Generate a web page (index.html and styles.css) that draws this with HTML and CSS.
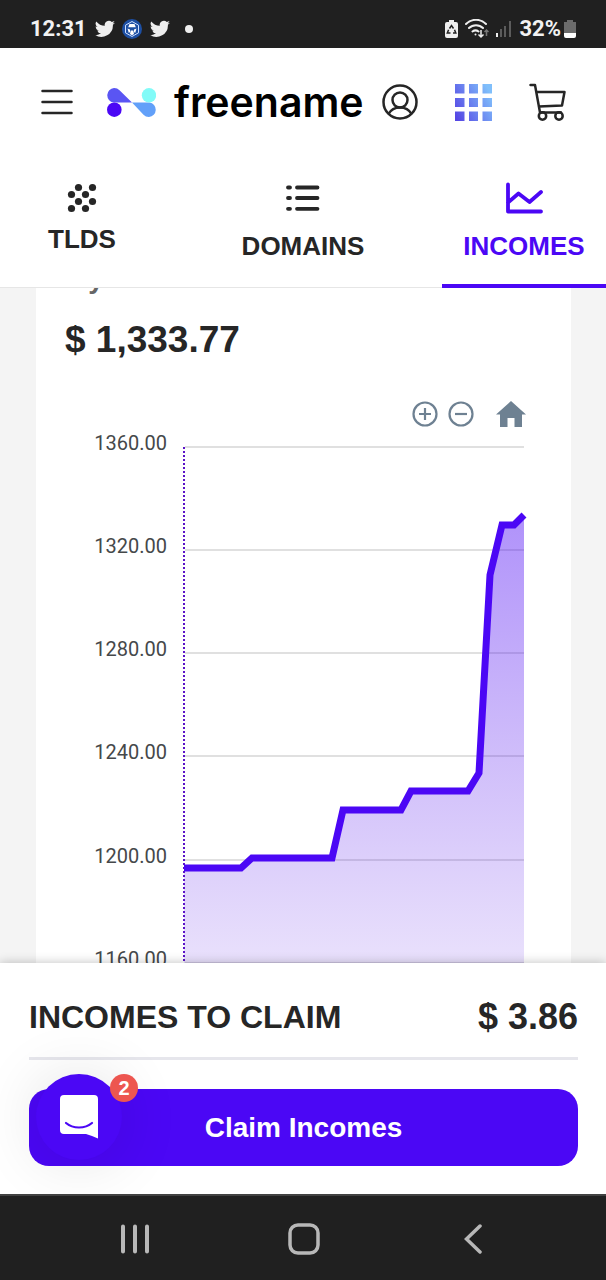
FILE: index.html
```html
<!DOCTYPE html>
<html lang="en">
<head>
    <meta charset="UTF-8">
    <meta name="viewport" content="width=device-width, initial-scale=1.0">
    <title>freename - Incomes</title>
    <link rel="stylesheet" href="styles.css">
</head>

<body>
    <!-- status bar -->
    <div class="status-bar">
        <div class="status-group">
            <span>12:31</span>
            <svg class="bird" width="20" height="18" viewBox="1 2 22 19"><path fill="#eee" d="M23 4.6a9 9 0 0 1-2.6.7 4.500 4.500 0 0 0 2-2.500 9 9 0 0 1-2.900 1.100A4.500 4.500 0 0 0 11.800 8 12.900 12.900 0 0 1 2.400 3.200a4.500 4.500 0 0 0 1.400 6 4.500 4.500 0 0 1-2-.6 4.500 4.500 0 0 0 3.600 4.500 4.500 4.500 0 0 1-2 .1 4.500 4.500 0 0 0 4.200 3.100A9.100 9.100 0 0 1 1 18.200 12.800 12.800 0 0 0 20.700 6.800 9 9 0 0 0 23 4.600z"/></svg>
            <svg width="20" height="20" viewBox="0 0 20 20">
                <circle cx="10" cy="10" r="10" fill="#1d4fa3"/>
                <path d="M10 2.500l6.500 3.700v7.600L10 17.500l-6.500-3.700V6.200z" fill="none" stroke="#cfe0ff"/>
                <path d="M7.500 5h5l1.300 3.200H6.200zM5.500 9.500l2.500 1v2.500l-1.200 1zM14.500 9.500l-2.500 1v2.500l1.200 1zM8.700 11.500h2.600l.7 3.500-2 1.200L8 15z" fill="#fff"/>
            </svg>
            <svg class="bird" width="20" height="18" viewBox="1 2 22 19"><path fill="#eee" d="M23 4.6a9 9 0 0 1-2.6.7 4.500 4.500 0 0 0 2-2.500 9 9 0 0 1-2.900 1.100A4.500 4.500 0 0 0 11.800 8 12.900 12.900 0 0 1 2.400 3.200a4.500 4.500 0 0 0 1.400 6 4.500 4.500 0 0 1-2-.6 4.500 4.500 0 0 0 3.600 4.500 4.500 4.500 0 0 1-2 .1 4.500 4.500 0 0 0 4.200 3.100A9.100 9.100 0 0 1 1 18.200 12.800 12.800 0 0 0 20.700 6.800 9 9 0 0 0 23 4.600z"/></svg>
            <span class="more-dot"></span>
        </div>
        <div class="status-group status-right">
            <svg width="13" height="18" viewBox="0 0 13 18">
                <path d="M4 0h5v2h2a2 2 0 0 1 2 2v12a2 2 0 0 1-2 2H2a2 2 0 0 1-2-2V4a2 2 0 0 1 2-2h2z" fill="#eee"/>
                <path d="M4.500 8.500L6.500 5.500l2 3M9.500 9.800l1.300 3.200H8M5.500 13H2.300l1.300-3.200" fill="none" stroke="#202020" stroke-width="1.500"/>
            </svg>
            <svg width="24" height="20" viewBox="0 0 24 20" fill="none" stroke="#eee" stroke-width="2">
                <path d="M1 5a14 14 0 0 1 20 0M4 9a10 10 0 0 1 14 0M7.500 12.500a5 5 0 0 1 6 0" stroke-linecap="round"/>
                <circle cx="10.500" cy="15.500" r="1" fill="#eee" stroke="none"/>
                <path d="M16 11v7M13.500 15.500l2.500 2.500 2.500-2.500" stroke-width="1.500"/>
                <path d="M21.500 17v-6M19.500 13l2-2 2 2" stroke="#777" stroke-width="1.500"/>
            </svg>
            <svg width="16" height="17" viewBox="0 0 16 17">
                <path d="M0 13h2v4H0z" fill="#eee"/>
                <path d="M4 9h2v8H4zM8 6h2v11H8zM13 1h2v16h-2z" fill="#5c5c5c"/>
            </svg>
            <span class="battery-label">32%</span>
            <svg width="12" height="18" viewBox="0 0 12 18">
                <path d="M3 0h6v2h3v11H0V2h3z" fill="#6b6b6b"/>
                <path d="M0 13h12v3a2 2 0 0 1-2 2H2a2 2 0 0 1-2-2z" fill="#fff"/>
            </svg>
        </div>
    </div>

    <!-- header -->
    <header class="header">
        <button class="icon-button" aria-label="Menu">
            <svg width="32" height="26" viewBox="0 0 32 26" stroke="#262626" stroke-width="2.500" stroke-linecap="round"><path d="M1.500 2h29M1.500 13h29M1.500 24h29"/></svg>
        </button>
        <a class="logo" href="#">
            <svg width="49" height="29" viewBox="0 0 49 29">
                <path d="M7 0a7.500 7.500 0 0 1 5.500 2.300L25 14.500H6.500A7.300 7.300 0 0 1 7 0z" fill="#5a55f3"/>
                <path d="M42 29a7.500 7.500 0 0 1-5.500-2.300L25 14.500h17.500A7.300 7.300 0 0 1 42 29z" fill="#62a0f9"/>
                <circle cx="42" cy="7.300" r="7.200" fill="#82fbf8"/>
                <circle cx="7.300" cy="21.700" r="7.300" fill="#4b07f5"/>
            </svg>
            <span class="logo-text">freename</span>
        </a>
        <div class="header-actions">
            <button class="icon-button" aria-label="Account">
                <svg width="36" height="36" viewBox="0 0 36 36" fill="none" stroke="#262626" stroke-width="2.500">
                    <circle cx="18" cy="18" r="16.500"/>
                    <circle cx="18" cy="16" r="7.500"/>
                    <path d="M6.500 30c2.500-4.500 6.500-6.500 11.500-6.500s9 2 11.500 6.500"/>
                </svg>
            </button>
            <button class="icon-button" aria-label="Apps">
                <svg width="37" height="37" viewBox="0 0 37 37">
                    <defs>
                        <linearGradient id="apps" gradientUnits="userSpaceOnUse" x1="0" y1="32" x2="37" y2="12">
                            <stop offset="0" stop-color="#5546e4"/>
                            <stop offset="1" stop-color="#80bffb"/>
                        </linearGradient>
                    </defs>
                    <path fill="url(#apps)" d="M0 0h9.500v9.500H0zM14 0h9v9.500h-9zM27.500 0H37v9.500h-9.500zM0 14h9.500v9H0zM14 14h9v9h-9zM27.500 14H37v9h-9.500zM0 27.500h9.500V37H0zM14 27.500h9V37h-9zM27.500 27.500H37V37h-9.500z"/>
                </svg>
            </button>
            <button class="icon-button" aria-label="Cart">
                <svg width="37" height="38" viewBox="0 0 37 38" fill="none" stroke="#262626" stroke-width="2.500" stroke-linecap="round" stroke-linejoin="round">
                    <path d="M1.500 2H6l5 27.500M7.700 9H35.500l-2.500 13.500-23.200 1M11 29.500h21"/>
                    <circle cx="13.500" cy="33" r="3.700"/>
                    <circle cx="30" cy="33" r="3.700"/>
                </svg>
            </button>
        </div>
    </header>

    <!-- tabs -->
    <nav class="tabs">
        <a class="tab" href="#">
            <svg width="30" height="30" viewBox="0 0 30 30" fill="#262626">
                <circle cx="11.500" cy="4.500" r="3.600"/><circle cx="25.500" cy="4.500" r="3.600"/>
                <circle cx="4.500" cy="11.500" r="3.600"/><circle cx="18.500" cy="11.500" r="3.600"/>
                <circle cx="11.500" cy="18.500" r="3.600"/><circle cx="25.500" cy="18.500" r="3.600"/>
                <circle cx="4.500" cy="25.500" r="3.600"/><circle cx="18.500" cy="25.500" r="3.600"/>
            </svg>
            TLDS
        </a>
        <a class="tab" href="#">
            <svg width="44" height="44" viewBox="0 0 44 44" stroke="#262626" stroke-width="3.800" stroke-linecap="round"><path d="M7 11.500h2M16 11.500h20.500M7 22h2M16 22h20.500M7 32.800h2M16 32.800h20.500"/></svg>
            DOMAINS
        </a>
        <a class="tab active" href="#">
            <svg width="44" height="44" viewBox="0 0 44 44" fill="none" stroke="#4b07f5" stroke-width="3.800" stroke-linecap="round" stroke-linejoin="round"><path d="M6 8.500v27h33M6 26.500l10.500-9 11 8.500L39 16"/></svg>
            INCOMES
        </a>
    </nav>

    <!-- incomes card, scrolled under the tabs -->
    <main class="content">
        <section class="card">
            <h2 class="card-title">My Incomes</h2>
            <p class="total">$ 1,333.77</p>
            <div class="toolbar">
                <button class="icon-button" aria-label="Zoom in">
                    <svg width="26" height="26" viewBox="0 0 26 26" fill="none" stroke="#6e8192" stroke-width="2.200"><circle cx="13" cy="13" r="11.500"/><path d="M13 7v12M7 13h12"/></svg>
                </button>
                <button class="icon-button" aria-label="Zoom out">
                    <svg width="26" height="26" viewBox="0 0 26 26" fill="none" stroke="#6e8192" stroke-width="2.200"><circle cx="13" cy="13" r="11.500"/><path d="M7 13h12"/></svg>
                </button>
                <button class="icon-button home" aria-label="Reset zoom">
                    <svg width="30" height="26" viewBox="0 0 30 26" fill="#6e8192"><path d="M15 0l15 13.500h-4V26h-7.500v-9h-7v9H4V13.500H0z"/></svg>
                </button>
            </div>
            <svg class="chart" viewBox="0 0 535 560">
                <defs>
                    <linearGradient id="area" gradientUnits="userSpaceOnUse" x1="0" y1="82" x2="0" y2="531">
                        <stop offset="0" stop-color="#4b07f5" stop-opacity="0.440"/>
                        <stop offset="1" stop-color="#5514e8" stop-opacity="0.130"/>
                    </linearGradient>
                </defs>
                <path class="grid-line" d="M149 15H488M149 118H488M149 221H488M149 324H488M149 428H488M149 531H488"/>
                <path fill="url(#area)" d="M148 436H205L216 426H296L307 378H365L375 359H432L443 341L454 143L466 93H478L488 83V531H148z"/>
                <path class="cursor-line" d="M148 15V531"/>
                <path class="line" d="M148 436H205L216 426H296L307 378H365L375 359H432L443 341L454 143L466 93H478L488 83"/>
                <g class="axis">
                    <text x="131" y="18">1360.00</text>
                    <text x="131" y="121">1320.00</text>
                    <text x="131" y="224">1280.00</text>
                    <text x="131" y="327">1240.00</text>
                    <text x="131" y="431">1200.00</text>
                    <text x="131" y="534">1160.00</text>
                </g>
            </svg>
        </section>
    </main>

    <!-- claim panel -->
    <section class="claim">
        <div class="claim-row">
            <span>INCOMES TO CLAIM</span>
            <span class="claim-amount">$ 3.86</span>
        </div>
        <button class="claim-button">Claim Incomes</button>
        <button class="chat" aria-label="Open chat">
            <svg width="38" height="44" viewBox="0 0 38 44">
                <path d="M4 0h30a4 4 0 0 1 4 4v39.500c-4-1.500-8-3.500-12-4.500H4a4 4 0 0 1-4-4V4a4 4 0 0 1 4-4z" fill="#fff"/>
                <path d="M6 28c7 6 19 6 26 0" fill="none" stroke="#4b07f5" stroke-width="2.200" stroke-linecap="round"/>
            </svg>
            <span class="chat-badge">2</span>
        </button>
    </section>

    <!-- system navigation -->
    <nav class="system-nav">
        <button class="icon-button" aria-label="Recent apps">
            <svg width="30" height="30" viewBox="0 0 30 30" stroke="#b8b8b8" stroke-width="4" stroke-linecap="round"><path d="M3 2.500v25M15 2.500v25M27 2.500v25"/></svg>
        </button>
        <button class="icon-button" aria-label="Home">
            <svg width="32" height="32" viewBox="0 0 32 32" fill="none" stroke="#b8b8b8" stroke-width="3.500"><rect x="2" y="2" width="28" height="28" rx="8"/></svg>
        </button>
        <button class="icon-button" aria-label="Back">
            <svg width="18" height="30" viewBox="0 0 18 30" fill="none" stroke="#b8b8b8" stroke-width="3.500" stroke-linecap="round"><path d="M16 2L2.500 15 16 28"/></svg>
        </button>
    </nav>
</body>
</html>
```
FILE: styles.css
```css
* {
    box-sizing: border-box;
}

body {
    font-family: "Liberation Sans", Arial, sans-serif;
    background-color: #f4f4f4;
    color: #262626;
    margin: 0;
    display: flex;
    flex-direction: column;
    height: 100vh;
}

svg {
    display: block;
}

button {
    font-family: inherit;
    border: none;
    padding: 0;
    cursor: pointer;
}

a {
    color: inherit;
    text-decoration: none;
}

.icon-button {
    background: none;
}

/* status bar */
.status-bar {
    display: flex;
    justify-content: space-between;
    align-items: center;
    height: 48px;
    padding: 9px 30px 0;
    background-color: #202020;
    color: #f2f2f2;
    font-family: Roboto, sans-serif;
    font-size: 22px;
    font-weight: 700;
}

.status-group {
    display: flex;
    align-items: center;
    gap: 7px;
}

.status-group .bird {
    margin-left: 1px;
}

.battery-label {
    margin-right: -4px;
}

.more-dot {
    width: 8px;
    height: 8px;
    margin-left: 8px;
    border-radius: 50%;
    background-color: #eee;
}

/* header */
.header {
    display: flex;
    align-items: center;
    height: 108px;
    padding: 0 40px 0 41px;
    background-color: #fff;
}

.logo {
    display: flex;
    align-items: center;
    gap: 18px;
    margin-left: 34px;
}

.logo-text {
    font-family: Inter, sans-serif;
    font-size: 41px;
    font-weight: 600;
    line-height: 48px;
    color: #000;
}

.header-actions {
    display: flex;
    align-items: center;
    gap: 37px;
    margin-left: auto;
}

/* tabs */
.tabs {
    display: flex;
    justify-content: space-between;
    height: 132px;
    background-color: #fff;
    box-shadow: inset 0 -1px #e6e6e6;
}

.tab {
    display: flex;
    flex-direction: column;
    align-items: center;
    justify-content: center;
    gap: 11px;
    min-width: 164px;
    padding-bottom: 4px;
    border-bottom: 4px solid transparent;
    font-size: 26px;
    font-weight: 700;
    line-height: 30px;
}

.tab.active {
    color: #4b07f5;
    border-bottom-color: #4b07f5;
}

/* card */
.content {
    flex: 1;
    min-height: 0;
    overflow: hidden;
    padding: 0 35px 0 36px;
}

.card {
    margin-top: -31px;
    background-color: #fff;
}

.card-title {
    margin: 0;
    padding: 6px 29px 0;
    font-size: 28px;
    font-weight: 700;
    line-height: 32px;
    color: #666;
}

.total {
    margin: 0;
    padding: 23px 29px 0;
    font-size: 37px;
    font-weight: 700;
    line-height: 44px;
}

.toolbar {
    display: flex;
    justify-content: flex-end;
    gap: 10px;
    padding: 39px 45px 5px;
}

.home {
    margin-left: 12px;
}

.chart {
    width: 100%;
}

.grid-line {
    stroke: #e0e0e0;
    stroke-width: 2;
}

.cursor-line {
    stroke: #5a12c8;
    stroke-width: 2;
    stroke-dasharray: 2;
}

.line {
    fill: none;
    stroke: #4b07f5;
    stroke-width: 7;
}

.axis {
    font-family: Roboto, sans-serif;
    font-size: 20px;
    fill: #45484a;
    text-anchor: end;
}

/* claim panel */
.claim {
    position: relative;
    padding: 30px 28px 28px 29px;
    background-color: #fff;
    box-shadow: 0 0 10px rgba(0, 0, 0, 0.25);
}

.claim-row {
    display: flex;
    justify-content: space-between;
    padding-bottom: 16px;
    border-bottom: 3px solid #e6e6ec;
    font-size: 32px;
    font-weight: 700;
    line-height: 48px;
}

.claim-amount {
    font-size: 36px;
}

.claim-button {
    display: block;
    width: 100%;
    height: 77px;
    margin-top: 29px;
    border-radius: 20px;
    background-color: #4b07f5;
    color: #fff;
    font-size: 28px;
    font-weight: 700;
}

.chat {
    position: absolute;
    left: 36px;
    bottom: 34px;
    display: flex;
    align-items: center;
    justify-content: center;
    width: 86px;
    height: 86px;
    border-radius: 50%;
    background-color: #4b07f5;
    box-shadow: 0 2px 64px rgba(0, 0, 0, 0.12);
}

.chat-badge {
    position: absolute;
    top: 0;
    right: -16px;
    width: 28px;
    border-radius: 50%;
    background-color: #ed5650;
    color: #fff;
    font-size: 20px;
    font-weight: 700;
    line-height: 28px;
}

/* system navigation */
.system-nav {
    position: relative;
    display: flex;
    height: 86px;
    padding: 2px 49px 0 51px;
    border-top: 2px solid #414141;
    background-color: #202020;
}

.system-nav .icon-button {
    display: flex;
    flex: 1;
    align-items: center;
    justify-content: center;
}
```
